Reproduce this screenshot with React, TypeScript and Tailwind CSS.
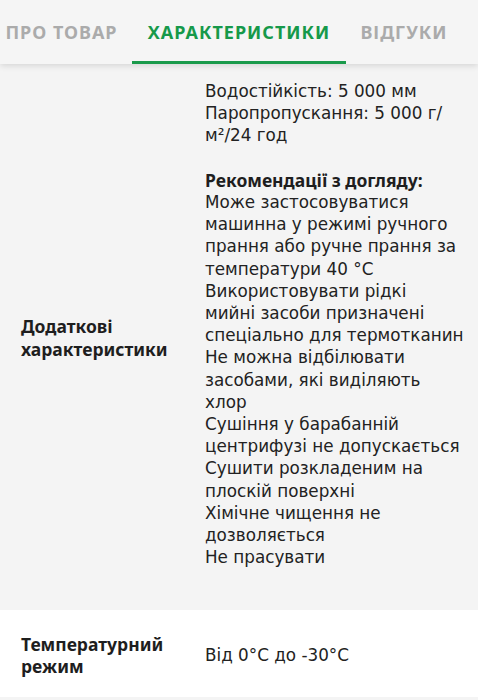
import React from "react";

const tabs = [
  { label: "ПРО ТОВАР", w: "w-[141px]", active: false },
  { label: "ХАРАКТЕРИСТИКИ", w: "w-[214px]", active: true },
  { label: "ВІДГУКИ", w: "w-[116px]", active: false },
];

type Line = { text: string; bold?: boolean };

const details: Line[] = [
  { text: "Водостійкість: 5 000 мм" },
  { text: "Паропропускання: 5 000 г/" },
  { text: "м²/24 год" },
  { text: "" },
  { text: "Рекомендації з догляду:", bold: true },
  { text: "Може застосовуватися" },
  { text: "машинна у режимі ручного" },
  { text: "прання або ручне прання за" },
  { text: "температури 40 °C" },
  { text: "Використовувати рідкі" },
  { text: "мийні засоби призначені" },
  { text: "спеціально для термотканин" },
  { text: "Не можна відбілювати" },
  { text: "засобами, які виділяють" },
  { text: "хлор" },
  { text: "Сушіння у барабанній" },
  { text: "центрифузі не допускається" },
  { text: "Сушити розкладеним на" },
  { text: "плоскій поверхні" },
  { text: "Хімічне чищення не" },
  { text: "дозволяється" },
  { text: "Не прасувати" },
];

const body = { fontFamily: '"DejaVu Sans", "Noto Sans", sans-serif' };
const heading = { fontFamily: '"Noto Sans", Inter, sans-serif' };

export default function App() {
  return (
    <div className="w-[478px] h-[700px] overflow-hidden bg-[#f4f4f4] text-[#1e1e1e]" style={heading}>
      {/* tab bar */}
      <div className="relative z-10 h-[64px] bg-[#f5f5f5] shadow-[0_2px_6px_rgba(0,0,0,0.12)] overflow-hidden">
        <div className="flex h-full ml-[-9px]">
          {tabs.map((t) => (
            <div
              key={t.label}
              className={`relative shrink-0 ${t.w} flex items-center justify-center text-[18px] font-bold tracking-[1px] ${
                t.active ? "text-[#16994a]" : "text-[#ababab]"
              }`}
            >
              {t.label}
              {t.active && (
                <div className="absolute left-0 right-0 bottom-0 h-[3px] bg-[#1a9a4b]" />
              )}
            </div>
          ))}
        </div>
      </div>

      {/* specification rows */}
      <div className="flex bg-[#f4f4f4]">
        <div className="w-[205px] shrink-0 pl-[21px] pr-3 flex items-center pt-[1px] text-[17.5px] font-bold leading-[22.6px]">
          Додаткові характеристики
        </div>
        <div className="pt-[16px] pb-[42px] text-[16.8px] leading-[22.2px] whitespace-nowrap text-[#222]" style={body}>
          {details.map((l, i) =>
            l.text === "" ? (
              <div key={i} className="h-[22.2px]" />
            ) : l.bold ? (
              <div key={i} className="font-bold text-[17.5px] text-[#1e1e1e]" style={heading}>
                {l.text}
              </div>
            ) : (
              <div key={i}>{l.text}</div>
            )
          )}
        </div>
      </div>

      <div className="flex bg-white h-[87px] items-center">
        <div className="w-[205px] shrink-0 pl-[21px] pr-3 pt-[2px] text-[17.5px] font-bold leading-[22.4px]">
          Температурний режим
        </div>
        <div className="text-[16.8px] leading-[22.2px] pt-[3px] text-[#222]" style={body}>
          Від 0°C до -30°C
        </div>
      </div>
    </div>
  );
}
